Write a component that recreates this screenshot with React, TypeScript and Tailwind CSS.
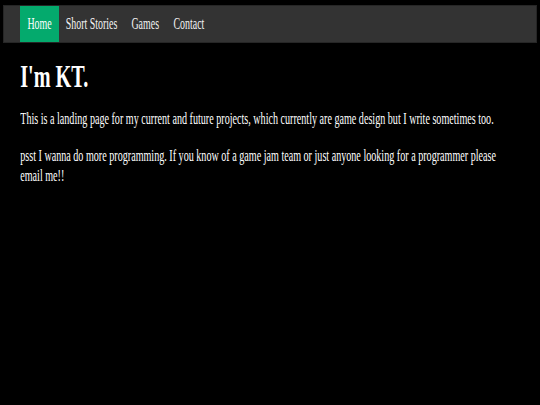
const NAV = [
  { label: "Home", w: "w-[39px]", active: true },
  { label: "Short Stories", w: "w-[66px]", active: false },
  { label: "Games", w: "w-[41px]", active: false },
  { label: "Contact", w: "w-[46px]", active: false },
];

export default function App() {
  return (
    <div
      className="min-h-[405px] w-[540px] overflow-hidden bg-black text-white"
      style={{ fontFamily: '"Liberation Serif", "Times New Roman", serif' }}
    >
      <nav className="mx-[3px] mt-[5px] flex h-[38px] border border-[#262626] bg-[#333333] pl-[16px]">
        {NAV.map((item) => (
          <a
            key={item.label}
            href="#"
            className={`flex ${item.w} items-center justify-center overflow-visible whitespace-nowrap text-[16px] leading-none ${
              item.active ? "bg-[#04AA6D] text-white" : "text-[#f2f2f2]"
            }`}
          >
            <span className="inline-block scale-x-[0.62]">{item.label}</span>
          </a>
        ))}
      </nav>

      <main className="w-[853px] origin-left scale-x-[0.632] pl-[32px] pr-[44px] pt-[15px]">
        <h1 className="text-[32px] font-bold leading-[1.15]">I'm KT.</h1>
        <p className="mt-[14px] text-[16px] leading-[20px]">
          This is a landing page for my current and future projects, which currently are game design but I write sometimes too.
        </p>
        <p className="mt-[17px] text-[16px] leading-[20px]">
          psst I wanna do more programming. If you know of a game jam team or just anyone looking for a programmer please email me!!
        </p>
      </main>
    </div>
  );
}
